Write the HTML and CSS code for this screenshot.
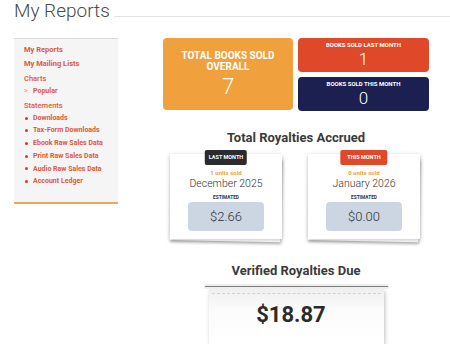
FILE: index.html
```html
<!DOCTYPE html>
<html>
<head>
  <title>My Reports</title>
  <link rel="stylesheet" href="styles.css">
</head>
<body>
  <div class="page-head">
    <h1>My Reports</h1>
    <div class="head-rule"></div>
  </div>

  <div class="layout">
    <div class="sidebar">
      <a class="nav-main" href="#">My Reports</a>
      <a class="nav-main" href="#">My Mailing Lists</a>
      <div class="nav-group">Charts</div>
      <a class="nav-sub arrow" href="#"><span class="mark">&gt;</span>Popular</a>
      <div class="nav-group statements">Statements</div>
      <a class="nav-sub dot" href="#"><span class="mark"></span>Downloads</a>
      <a class="nav-sub dot" href="#"><span class="mark"></span>Tax-Form Downloads</a>
      <a class="nav-sub dot" href="#"><span class="mark"></span>Ebook Raw Sales Data</a>
      <a class="nav-sub dot" href="#"><span class="mark"></span>Print Raw Sales Data</a>
      <a class="nav-sub dot" href="#"><span class="mark"></span>Audio Raw Sales Data</a>
      <a class="nav-sub dot" href="#"><span class="mark"></span>Account Ledger</a>
    </div>

    <div class="main">
      <div class="stats">
        <div class="stat stat-total">
          <div class="stat-label">TOTAL BOOKS SOLD<br>OVERALL</div>
          <div class="stat-value">7</div>
        </div>
        <div class="stat-col">
          <div class="stat stat-last">
            <div class="stat-label small">BOOKS SOLD LAST MONTH</div>
            <div class="stat-value small">1</div>
          </div>
          <div class="stat stat-this">
            <div class="stat-label small">BOOKS SOLD THIS MONTH</div>
            <div class="stat-value small">0</div>
          </div>
        </div>
      </div>

      <h2 class="section-title">Total Royalties Accrued</h2>
      <div class="royalties">
        <div class="paper">
          <div class="badge badge-dark">LAST MONTH</div>
          <div class="units">1 units sold</div>
          <div class="month">December 2025</div>
          <div class="estimated">ESTIMATED</div>
          <div class="amount">$2.66</div>
        </div>
        <div class="paper">
          <div class="badge badge-red">THIS MONTH</div>
          <div class="units">0 units sold</div>
          <div class="month">January 2026</div>
          <div class="estimated">ESTIMATED</div>
          <div class="amount">$0.00</div>
        </div>
      </div>

      <h2 class="section-title verified">Verified Royalties Due</h2>
      <div class="receipt">
        <div class="rail"></div>
        <div class="receipt-body">
          <div class="receipt-amount">$18.87</div>
        </div>
      </div>
    </div>
  </div>
</body>
</html>
```

FILE: styles.css
```css
body {
  margin: 0;
  font-family: Roboto, 'Liberation Sans', sans-serif;
  background-color: #fff;
  color: #333;
  overflow: hidden;
}

.page-head {
  display: flex;
  align-items: flex-start;
  padding-left: 14px;
  height: 22px;
}
.page-head h1 {
  margin: 0;
  font-size: 19px;
  font-weight: 300;
  color: #4a4a4a;
  line-height: 22px;
}
.head-rule {
  flex: 1;
  height: 1px;
  background-color: #e3e3e3;
  margin: 16px 0 0 4px;
}

.layout {
  display: flex;
  align-items: flex-start;
  margin-top: 16px;
}

.sidebar {
  width: 104px;
  margin-left: 14px;
  background-color: #f5f5f5;
  border-top: 1px solid #dcdcdc;
  border-bottom: 2px solid #f0a45c;
  padding: 4px 0 14px 10px;
  box-sizing: border-box;
  display: flex;
  flex-direction: column;
}
.sidebar a {
  text-decoration: none;
  color: #e0583a;
}
.nav-main {
  font-size: 7.5px;
  font-weight: 700;
  line-height: 14px;
}
.nav-group {
  font-size: 7.5px;
  font-weight: 500;
  color: #e0583a;
  line-height: 12px;
  margin-top: 2px;
}
.nav-sub {
  font-size: 7px;
  font-weight: 700;
  line-height: 12.7px;
  display: flex;
  align-items: center;
}
.nav-sub .mark {
  display: inline-block;
  width: 9px;
  flex: none;
}
.arrow .mark {
  font-weight: 300;
  font-size: 7px;
  color: #e0583a;
}
.dot .mark::before {
  content: "";
  display: block;
  width: 3px;
  height: 3px;
  margin-left: 1px;
  border-radius: 50%;
  background-color: #d43a2a;
}

.main {
  margin-left: 45px;
  width: 266px;
}

.stats {
  display: flex;
  gap: 5px;
}
.stat {
  border-radius: 4px;
  color: #fff;
  text-align: center;
}
.stat-total {
  width: 130px;
  height: 72px;
  background-color: #f0a03c;
  padding-top: 12px;
  box-sizing: border-box;
}
.stat-col {
  display: flex;
  flex-direction: column;
  gap: 5px;
  width: 131px;
}
.stat-last,
.stat-this {
  height: 34px;
  padding-top: 3px;
  box-sizing: border-box;
}
.stat-last {
  background-color: #e0482a;
}
.stat-this {
  background-color: #1b2050;
}
.stat-label {
  font-size: 10px;
  font-weight: 700;
  line-height: 11px;
}
.stat-label.small {
  font-size: 6px;
  line-height: 8px;
}
.stat-value {
  font-size: 22px;
  font-weight: 300;
  line-height: 28px;
  margin-top: 1px;
}
.stat-value.small {
  font-size: 17px;
  line-height: 20px;
  margin-top: 0;
}

.section-title {
  margin: 19px 0 0;
  font-size: 13px;
  font-weight: 700;
  color: #3a3a3a;
  text-align: center;
  line-height: 16px;
}
.section-title.verified {
  margin-top: 24px;
  line-height: 15px;
}

.royalties {
  display: flex;
  gap: 26px;
  margin: 8px 0 0 7px;
}
.paper {
  position: relative;
  width: 112px;
  height: 85px;
  background-color: #fff;
  box-shadow: 0 1px 4px rgba(0, 0, 0, 0.25);
  text-align: center;
  padding-top: 14px;
  box-sizing: border-box;
}
.paper::after {
  content: "";
  position: absolute;
  left: 1px;
  right: 0;
  top: 2px;
  bottom: -1px;
  background-color: #fff;
  box-shadow: 1px 2px 3px rgba(0, 0, 0, 0.3);
  transform: rotate(1.2deg);
  transform-origin: left top;
  z-index: -1;
}
.badge {
  position: absolute;
  top: -4px;
  left: 50%;
  transform: translateX(-50%);
  font-size: 5.5px;
  font-weight: 700;
  color: #fff;
  padding: 0 4px;
  line-height: 15px;
  border-radius: 2px;
  white-space: nowrap;
}
.badge-dark {
  background-color: #2b2b30;
}
.badge-red {
  background-color: #e0482a;
  padding: 0 7px;
}
.units {
  font-size: 6px;
  font-weight: 700;
  color: #f0a03c;
  line-height: 9px;
}
.month {
  font-size: 10.5px;
  font-weight: 300;
  color: #333;
  line-height: 14px;
}
.estimated {
  font-size: 4.8px;
  font-weight: 700;
  color: #333;
  line-height: 7px;
  margin-top: 2.5px;
}
.amount {
  margin: 1.5px auto 0;
  width: 76px;
  height: 29px;
  background-color: #ccd6e2;
  border-radius: 4px;
  font-size: 13px;
  font-weight: 300;
  color: #333;
  line-height: 29px;
}

.receipt {
  width: 185px;
  margin: 8px auto 0;
}
.rail {
  position: relative;
  height: 5px;
  margin-top: -2px;
  background-color: #ededed;
  border-radius: 3px;
}
.rail::before {
  content: "";
  position: absolute;
  left: 1px;
  right: 1px;
  top: 2px;
  height: 1px;
  background-color: #808080;
}
.receipt-body {
  margin: 0 5px;
  height: 55px;
  background: linear-gradient(#efefef, #fbfbfb 35%, #fff);
  box-shadow: 1px 2px 4px rgba(0, 0, 0, 0.25);
  padding-top: 4px;
  box-sizing: border-box;
}
.receipt-body::before {
  content: "";
  display: block;
  margin: 0 3px;
  border-top: 1px dashed #d2d2d2;
}
.receipt-amount {
  text-align: center;
  font-size: 22px;
  font-weight: 700;
  color: #2c2c2c;
  line-height: 26px;
  margin: 8px 10px 0 0;
}
```
